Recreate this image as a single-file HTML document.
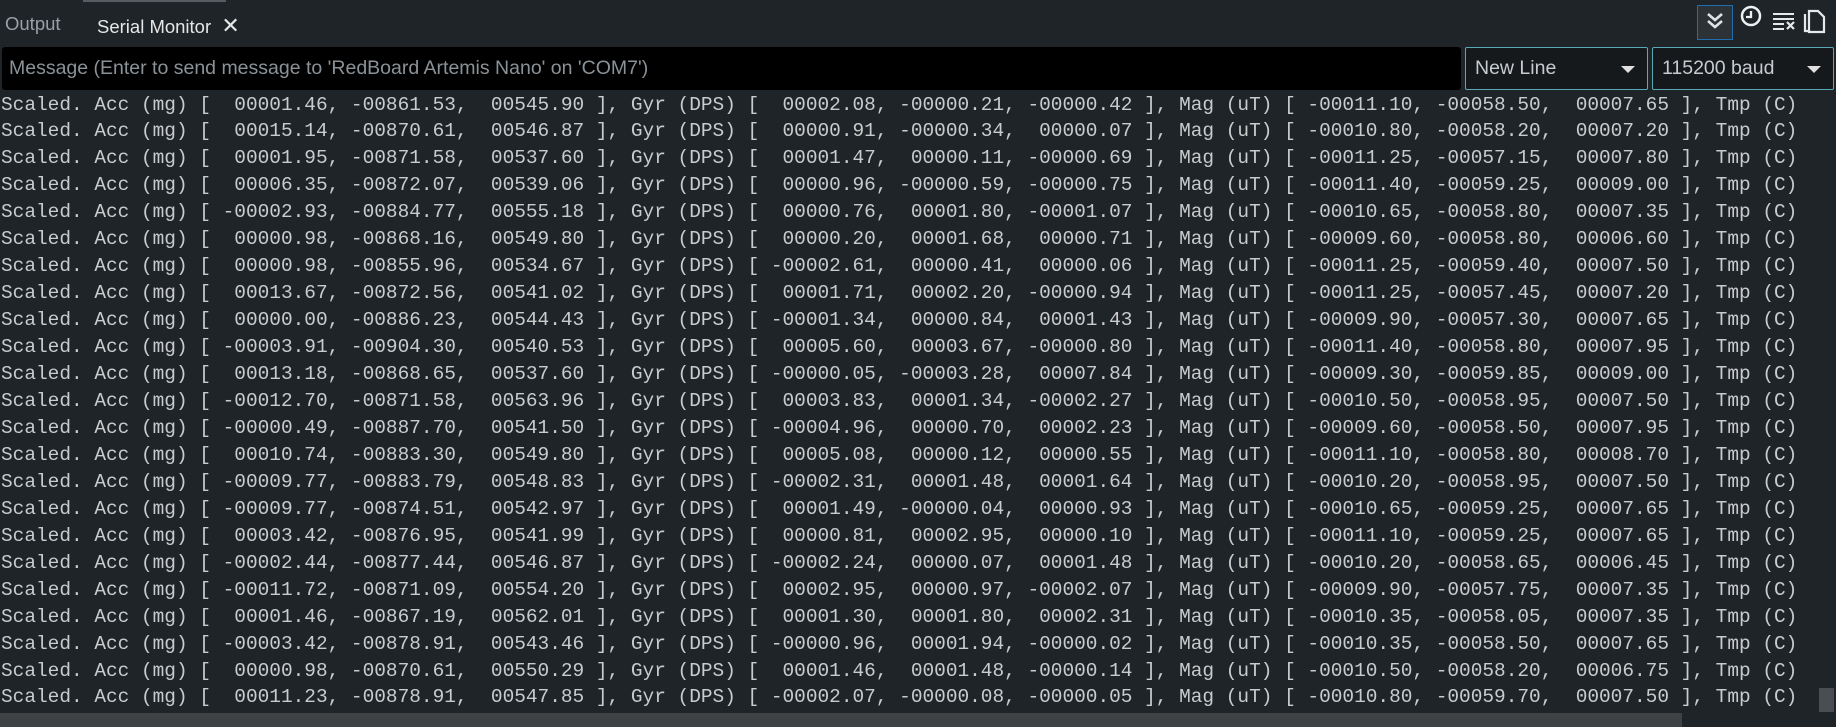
<!DOCTYPE html>
<html><head><meta charset="utf-8"><style>
html,body{margin:0;padding:0;width:1836px;height:727px;overflow:hidden;background:#1f2428;}
.tabs{position:absolute;left:0;top:0;width:1836px;height:46px;background:#1f2428;font-family:"Liberation Sans",sans-serif;font-size:18.5px;}
.tabline{position:absolute;left:83px;top:0;width:143px;height:2px;background:#555c62;}
.t1{position:absolute;left:5px;top:13px;color:#9aa0a6;}
.t2{position:absolute;left:97px;top:13px;color:#e6e6e6;}
.btn{position:absolute;left:1697px;top:5px;width:34px;height:33px;border:1px solid #1f6fb0;background:#2c3236;}
.input{position:absolute;left:2px;top:47px;width:1459px;height:43px;background:#000;border-radius:3px;font-family:"Liberation Sans",sans-serif;font-size:19.5px;color:#8b9297;line-height:43px;padding-left:7px;box-sizing:border-box;}
.dd{position:absolute;top:47px;height:43px;border:1px solid #5aa9b8;border-radius:2px;background:#16191c;box-sizing:border-box;font-family:"Liberation Sans",sans-serif;font-size:19.5px;color:#c6cbcf;line-height:41px;padding-left:9px;}
.dd:after{content:"";position:absolute;right:12px;top:18px;border-left:7px solid transparent;border-right:7px solid transparent;border-top:7px solid #e0e0e0;}
.log{position:absolute;left:0;top:91px;width:1836px;height:622px;overflow:hidden;}
pre{margin:0;margin-top:0.5px;padding-left:1px;font-family:"Liberation Mono",monospace;font-size:19.45px;line-height:26.95px;color:#c9cbcc;}
.hs{position:absolute;left:0;top:713px;width:1682px;height:14px;background:#3e4245;}
.vs{position:absolute;left:1819px;top:688px;width:15px;height:24px;background:#4a4e52;}
</style></head><body>
<div class="tabs">
<div class="tabline"></div>
<div class="t1">Output</div>
<div class="t2">Serial Monitor &nbsp;<span style="font-size:22px">✕</span></div>
<div class="btn"><svg width="34" height="33" viewBox="0 0 34 33"><path d="M10 8 L17 14 L24 8 M10 15 L17 21 L24 15" stroke="#dfe3e6" stroke-width="2.6" fill="none"/></svg></div>
<svg style="position:absolute;left:1739px;top:5px" width="24" height="24" viewBox="0 0 24 24"><circle cx="12" cy="11" r="9" stroke="#eef0f2" stroke-width="2.5" fill="none"/><path d="M12 6 V12 H7" stroke="#eef0f2" stroke-width="2.3" fill="none"/></svg>
<svg style="position:absolute;left:1772px;top:11px" width="26" height="20" viewBox="0 0 26 20"><path d="M1 3H22M1 8H22M1 13H12M1 18H12" stroke="#e6e9ec" stroke-width="2"/><path d="M15 11L22 18M22 11L15 18" stroke="#e6e9ec" stroke-width="2.2"/></svg>
<svg style="position:absolute;left:1803px;top:9px" width="24" height="25" viewBox="0 0 24 25"><path d="M2 5V22H5" stroke="#e6e9ec" stroke-width="2.2" fill="none"/><path d="M6 2H15L21 8V23H6Z" stroke="#e6e9ec" stroke-width="2.2" fill="none"/></svg>
</div>
<div class="log"><pre>Scaled. Acc (mg) [  00001.46, -00861.53,  00545.90 ], Gyr (DPS) [  00002.08, -00000.21, -00000.42 ], Mag (uT) [ -00011.10, -00058.50,  00007.65 ], Tmp (C)
Scaled. Acc (mg) [  00015.14, -00870.61,  00546.87 ], Gyr (DPS) [  00000.91, -00000.34,  00000.07 ], Mag (uT) [ -00010.80, -00058.20,  00007.20 ], Tmp (C)
Scaled. Acc (mg) [  00001.95, -00871.58,  00537.60 ], Gyr (DPS) [  00001.47,  00000.11, -00000.69 ], Mag (uT) [ -00011.25, -00057.15,  00007.80 ], Tmp (C)
Scaled. Acc (mg) [  00006.35, -00872.07,  00539.06 ], Gyr (DPS) [  00000.96, -00000.59, -00000.75 ], Mag (uT) [ -00011.40, -00059.25,  00009.00 ], Tmp (C)
Scaled. Acc (mg) [ -00002.93, -00884.77,  00555.18 ], Gyr (DPS) [  00000.76,  00001.80, -00001.07 ], Mag (uT) [ -00010.65, -00058.80,  00007.35 ], Tmp (C)
Scaled. Acc (mg) [  00000.98, -00868.16,  00549.80 ], Gyr (DPS) [  00000.20,  00001.68,  00000.71 ], Mag (uT) [ -00009.60, -00058.80,  00006.60 ], Tmp (C)
Scaled. Acc (mg) [  00000.98, -00855.96,  00534.67 ], Gyr (DPS) [ -00002.61,  00000.41,  00000.06 ], Mag (uT) [ -00011.25, -00059.40,  00007.50 ], Tmp (C)
Scaled. Acc (mg) [  00013.67, -00872.56,  00541.02 ], Gyr (DPS) [  00001.71,  00002.20, -00000.94 ], Mag (uT) [ -00011.25, -00057.45,  00007.20 ], Tmp (C)
Scaled. Acc (mg) [  00000.00, -00886.23,  00544.43 ], Gyr (DPS) [ -00001.34,  00000.84,  00001.43 ], Mag (uT) [ -00009.90, -00057.30,  00007.65 ], Tmp (C)
Scaled. Acc (mg) [ -00003.91, -00904.30,  00540.53 ], Gyr (DPS) [  00005.60,  00003.67, -00000.80 ], Mag (uT) [ -00011.40, -00058.80,  00007.95 ], Tmp (C)
Scaled. Acc (mg) [  00013.18, -00868.65,  00537.60 ], Gyr (DPS) [ -00000.05, -00003.28,  00007.84 ], Mag (uT) [ -00009.30, -00059.85,  00009.00 ], Tmp (C)
Scaled. Acc (mg) [ -00012.70, -00871.58,  00563.96 ], Gyr (DPS) [  00003.83,  00001.34, -00002.27 ], Mag (uT) [ -00010.50, -00058.95,  00007.50 ], Tmp (C)
Scaled. Acc (mg) [ -00000.49, -00887.70,  00541.50 ], Gyr (DPS) [ -00004.96,  00000.70,  00002.23 ], Mag (uT) [ -00009.60, -00058.50,  00007.95 ], Tmp (C)
Scaled. Acc (mg) [  00010.74, -00883.30,  00549.80 ], Gyr (DPS) [  00005.08,  00000.12,  00000.55 ], Mag (uT) [ -00011.10, -00058.80,  00008.70 ], Tmp (C)
Scaled. Acc (mg) [ -00009.77, -00883.79,  00548.83 ], Gyr (DPS) [ -00002.31,  00001.48,  00001.64 ], Mag (uT) [ -00010.20, -00058.95,  00007.50 ], Tmp (C)
Scaled. Acc (mg) [ -00009.77, -00874.51,  00542.97 ], Gyr (DPS) [  00001.49, -00000.04,  00000.93 ], Mag (uT) [ -00010.65, -00059.25,  00007.65 ], Tmp (C)
Scaled. Acc (mg) [  00003.42, -00876.95,  00541.99 ], Gyr (DPS) [  00000.81,  00002.95,  00000.10 ], Mag (uT) [ -00011.10, -00059.25,  00007.65 ], Tmp (C)
Scaled. Acc (mg) [ -00002.44, -00877.44,  00546.87 ], Gyr (DPS) [ -00002.24,  00000.07,  00001.48 ], Mag (uT) [ -00010.20, -00058.65,  00006.45 ], Tmp (C)
Scaled. Acc (mg) [ -00011.72, -00871.09,  00554.20 ], Gyr (DPS) [  00002.95,  00000.97, -00002.07 ], Mag (uT) [ -00009.90, -00057.75,  00007.35 ], Tmp (C)
Scaled. Acc (mg) [  00001.46, -00867.19,  00562.01 ], Gyr (DPS) [  00001.30,  00001.80,  00002.31 ], Mag (uT) [ -00010.35, -00058.05,  00007.35 ], Tmp (C)
Scaled. Acc (mg) [ -00003.42, -00878.91,  00543.46 ], Gyr (DPS) [ -00000.96,  00001.94, -00000.02 ], Mag (uT) [ -00010.35, -00058.50,  00007.65 ], Tmp (C)
Scaled. Acc (mg) [  00000.98, -00870.61,  00550.29 ], Gyr (DPS) [  00001.46,  00001.48, -00000.14 ], Mag (uT) [ -00010.50, -00058.20,  00006.75 ], Tmp (C)
Scaled. Acc (mg) [  00011.23, -00878.91,  00547.85 ], Gyr (DPS) [ -00002.07, -00000.08, -00000.05 ], Mag (uT) [ -00010.80, -00059.70,  00007.50 ], Tmp (C)</pre></div>
<div class="input">Message (Enter to send message to 'RedBoard Artemis Nano' on 'COM7')</div>
<div class="dd" style="left:1465px;width:183px">New Line</div>
<div class="dd" style="left:1652px;width:182px">115200 baud</div>
<div class="vs"></div>
<div class="hs"></div>
</body></html>
